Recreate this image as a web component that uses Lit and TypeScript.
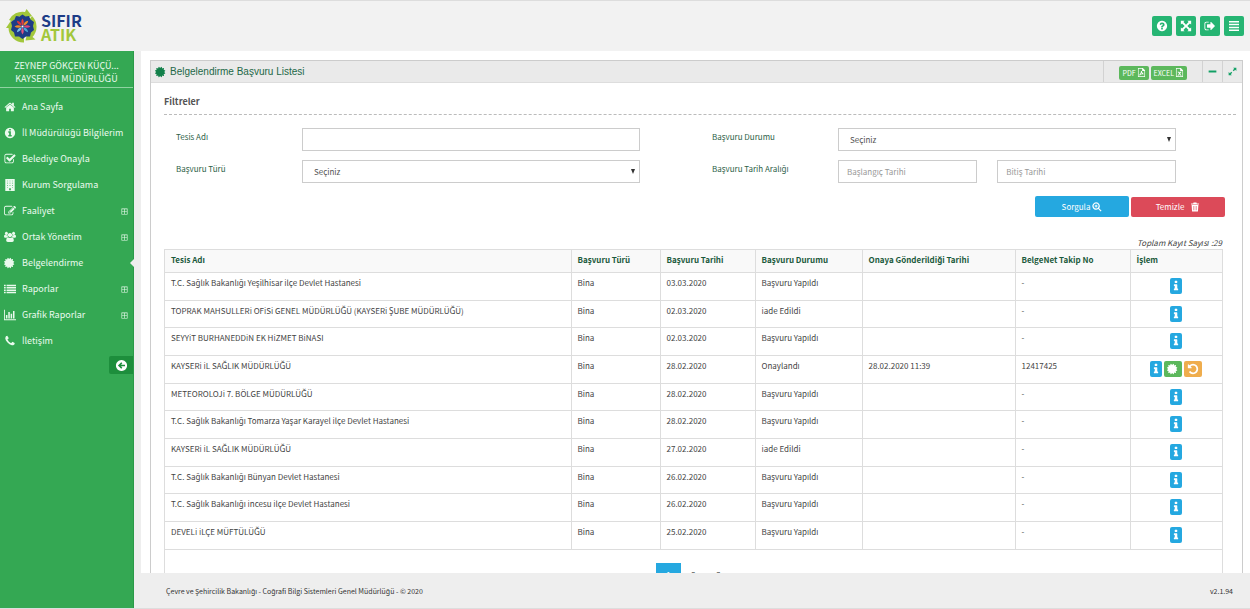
import { LitElement, html, svg, css, nothing } from "lit";
import { customElement } from "lit/decorators.js";

const CIRCLE =
  "q0 209-103 385.5t-279.5 279.5-385.5 103-385.5-103-279.5-279.5-103-385.5 103-385.5 279.5-279.5 385.5-103 385.5 103 279.5 279.5 103 385.5z";

const ICONS: Record<string, string> = {
  home: "M1472 992v480q0 26-19 45t-45 19h-384v-384h-256v384h-384q-26 0-45-19t-19-45v-480q0-1 .5-3t.5-3l575-474 575 474q1 2 1 6zm223-69l-62 74q-8 9-21 11h-3q-13 0-21-7l-692-577-692 577q-12 8-24 7-13-2-21-11l-62-74q-8-10-7-23.5t11-21.5l719-599q32-26 76-26t76 26l244 204v-195q0-14 9-23t23-9h192q14 0 23 9t9 23v408l219 182q10 8 11 21.5t-7 23.5z",
  infoCircle:
    "M1152 1376v-160q0-14-9-23t-23-9h-96v-512q0-14-9-23t-23-9h-320q-14 0-23 9t-9 23v160q0 14 9 23t23 9h96v320h-96q-14 0-23 9t-9 23v160q0 14 9 23t23 9h448q14 0 23-9t9-23zm-128-896v-160q0-14-9-23t-23-9h-192q-14 0-23 9t-9 23v160q0 14 9 23t23 9h192q14 0 23-9t9-23zm640 416" +
    CIRCLE,
  check:
    "M1472 930v318q0 119-84.5 203.5t-203.5 84.5h-832q-119 0-203.5-84.5t-84.5-203.5v-832q0-119 84.5-203.5t203.5-84.5h832q63 0 117 25 15 7 18 23 3 17-9 29l-49 49q-10 10-23 10-3 0-9-2-23-6-45-6h-832q-66 0-113 47t-47 113v832q0 66 47 113t113 47h832q66 0 113-47t47-113v-254q0-13 9-22l64-64q10-10 23-10 6 0 12 3 20 8 20 29zm231-489l-814 814q-24 24-57 24t-57-24l-430-430q-24-24-24-57t24-57l110-110q24-24 57-24t57 24l263 263 647-647q24-24 57-24t57 24l110 110q24 24 24 57t-24 57z",
  building:
    "M192 0h1408v1792h-1408zM448 256v96h128v-96zM832 256v96h128v-96zM1216 256v96h128v-96zM448 576v96h128v-96zM832 576v96h128v-96zM1216 576v96h128v-96zM448 896v96h128v-96zM832 896v96h128v-96zM1216 896v96h128v-96zM448 1216v96h128v-96zM1216 1216v96h128v-96zM768 1392v272h256v-272z",
  edit: "M888 1184l116-116-152-152-116 116v56h96v96h56zm440-720q-16-16-33 1l-350 350q-17 17-1 33t33-1l350-350q17-17 1-33zm80 594v190q0 119-84.5 203.5t-203.5 84.5h-832q-119 0-203.5-84.5t-84.5-203.5v-832q0-119 84.5-203.5t203.5-84.5h832q63 0 117 25 15 7 18 23 3 17-9 29l-49 49q-14 14-32 8-23-6-45-6h-832q-66 0-113 47t-47 113v832q0 66 47 113t113 47h832q66 0 113-47t47-113v-126q0-13 9-22l64-64q15-15 35-7t20 29zm-96-738l288 288-672 672h-288v-288zm444 132l-92 92-288-288 92-92q28-28 68-28t68 28l152 152q28 28 28 68t-28 68z",
  users:
    "M360 128a230 230 0 1 1-1 0zM1432 128a230 230 0 1 1-1 0zM896 280a320 320 0 1 1-1 0zM150 560q200 120 380 20q-20 200 90 320q-160 10-230 110h-210q-180-10-180-190q0-220 150-260zM1642 560q-200 120-380 20q20 200-90 320q160 10 230 110h210q180-10 180-190q0-220-150-260zM580 930q316 200 632 0q240 60 260 460q0 270-250 270h-652q-250 0-250-270q20-400 260-460z",
  certificate:
    "M1376 896l138 135q30 28 20 70-12 41-52 51l-188 48 53 186q12 41-19 70-29 31-70 19l-186-53-48 188q-10 40-51 52-12 2-19 2-31 0-51-22l-135-138-135 138q-28 30-70 20-41-11-51-52l-48-188-186 53q-41 12-70-19-31-29-19-70l53-186-188-48q-40-10-52-51-10-42 20-70l138-135-138-135q-30-28-20-70 12-41 52-51l188-48-53-186q-12-41 19-70 29-31 70-19l186 53 48-188q10-41 51-51 41-12 70 19l135 139 135-139q29-30 70-19 41 10 51 51l48 188 186-53q41-12 70 19 31 29 19 70l-53 186 188 48q40 10 52 51 10 42-20 70z",
  list: "M0 256h256v224h-256zM384 256h1408v224h-1408zM0 608h256v224h-256zM384 608h1408v224h-1408zM0 960h256v224h-256zM384 960h1408v224h-1408zM0 1312h256v224h-256zM384 1312h1408v224h-1408z",
  chart:
    "M0 128h128v1408h1664v128h-1792zM288 896h224v512h-224zM640 448h224v960h-224zM992 704h224v704h-224zM1344 288h224v1120h-224z",
  phone:
    "M1600 1240q0 27-10 70.5t-21 68.5q-21 50-122 106-94 51-186 51-27 0-52.5-3.5t-57.5-12.5-47.5-14.5-55.5-20.5-49-18q-98-35-175-83-128-79-264.5-215.5t-215.5-264.5q-48-77-83-175-3-9-18-49t-20.5-55.5-14.5-47.5-12.5-57.5-3.5-52.5q0-92 51-186 56-101 106-122 25-11 68.5-21t70.5-10q14 0 21 3 18 6 53 76 11 19 30 54t35 63.5 31 53.5q3 4 17.5 25t21.5 35.5 7 28.5q0 20-28.5 50t-62 55-62 53-28.5 46q0 9 5 22.5t8.5 20.5 14 24 11.5 19q76 137 174 235t235 174q2 1 19 11.5t24 14 20.5 8.5 22.5 5q18 0 46-28.5t53-62 55-62 50-28.5q14 0 28.5 7t35.5 21.5 25 17.5q25 15 53.5 31t63.5 35 54 30q70 35 76 53 3 7 3 21z",
  question:
    "M1024 1376v-192q0-14-9-23t-23-9h-192q-14 0-23 9t-9 23v192q0 14 9 23t23 9h192q14 0 23-9t9-23zm256-672q0-88-55.5-163t-138.5-116-170-41q-243 0-371 213-15 24 8 42l132 100q7 6 19 6 16 0 25-12 53-68 86-92 34-24 86-24 48 0 85.5 26t37.5 59q0 38-20 61t-68 45q-63 28-115.5 86.5t-52.5 125.5v36q0 14 9 23t23 9h192q14 0 23-9t9-23q0-19 21.5-49.5t54.5-49.5q32-18 49-28.5t46-35 44.5-48 28-60.5 12.5-81zm384 192" +
    CIRCLE,
  expand:
    "M128 128h560l-180 180 388 388 388-388-180-180h560v560l-180-180-388 388 388 388 180-180v560h-560l180-180-388-388-388 388 180 180h-560v-560l180 180 388-388-388-388-180 180z",
  signOut:
    "M704 1440q0 4 1 20t.5 26.5-3 23.5-10 19.5-20.5 6.5h-320q-119 0-203.5-84.5t-84.5-203.5v-704q0-119 84.5-203.5t203.5-84.5h320q13 0 22.5 9.5t9.5 22.5q0 4 1 20t.5 26.5-3 23.5-10 19.5-20.5 6.5h-320q-66 0-113 47t-47 113v704q0 66 47 113t113 47h312l11.5 1 11.5 3 8 5.5 7 9 2 13.5zm928-544q0 26-19 45l-544 544q-19 19-45 19t-45-19-19-45v-288h-448q-26 0-45-19t-19-45v-384q0-26 19-45t45-19h448v-288q0-26 19-45t45-19 45 19l544 544q19 19 19 45z",
  bars: "M150 150h1492v220h-1492zM150 574h1492v220h-1492zM150 998h1492v220h-1492zM150 1422h1492v220h-1492z",
  info: "M1216 1344v128q0 26-19 45t-45 19h-512q-26 0-45-19t-19-45v-128q0-26 19-45t45-19h64v-384h-64q-26 0-45-19t-19-45v-128q0-26 19-45t45-19h384q26 0 45 19t19 45v576h64q26 0 45 19t19 45zm-128-1152v192q0 26-19 45t-45 19h-256q-26 0-45-19t-19-45v-192q0-26 19-45t45-19h256q26 0 45 19t19 45z",
  undo: "M1664 896q0 156-61 298t-164 245-245 164-298 61q-172 0-327-72.5t-264-204.5q-7-10-6.5-22.5t8.5-20.5l137-138q10-9 25-9 16 2 23 12 73 95 179 147t225 52q104 0 198.5-40.5t163.5-109.5 109.5-163.5 40.5-198.5-40.5-198.5-109.5-163.5-163.5-109.5-198.5-40.5q-98 0-188 35.5t-160 101.5l137 138q31 30 14 69-17 40-59 40h-448q-26 0-45-19t-19-45v-448q0-42 40-59 39-17 69 14l130 129q107-101 244.5-156.5t284.5-55.5q156 0 298 61t245 164 164 245 61 298z",
  back: "M896 128a768 768 0 1 0 1 0zM860 440l150 150-180 190h550v232h-550l180 190-150 150-456-456z",
  trash:
    "M640 96h512l80 192h368v160h-1408v-160h368zM288 540h1216l-80 1156h-1056zM600 720v768h80v-768zM856 720v768h80v-768zM1112 720v768h80v-768z",
  zoomPlus:
    "M732 64a668 668 0 0 1 540 1060l440 440-148 148-440-440a668 668 0 1 1-392-1208zM732 290a442 442 0 1 0 1 0zM640 480h184v160h160v184h-160v160h-184v-160h-160v-184h160z",
  plusBox:
    "M128 128h1536v1536h-1536zM288 288v528h528v-528zM976 288v528h528v-528zM288 976v528h528v-528zM976 976v528h528v-528z",
  filePdf:
    "M192 0h960l448 448v1344h-1408zM320 128v1536h1152v-1088h-448v-448zM820 620h150q0 300 330 520l-40 130q-260-70-500 10q-130 200-260 220l-80-110q370-220 400-770zM880 960l-90 200h210z",
  fileExcel:
    "M192 0h960l448 448v1344h-1408zM320 128v1536h1152v-1088h-448v-448zM500 740h300l100 170 100-170h300v120h-90l-190 260 200 270h90v120h-330v-120h40l-110-170-110 170h40v120h-330v-120h90l200-270-190-260h-110z",
  minus: "M128 700h1536v392h-1536z",
  resize:
    "M1010 128h654v654l-236-236-290 290-182-182 290-290zM782 1664h-654v-654l236 236 290-290 182 182-290 290z",
};

const icon = (name: string) => html`<svg class="icon ${name}" viewBox="0 0 1792 1792" aria-hidden="true">
  <path fill-rule="evenodd" d=${ICONS[name]}></path>
</svg>`;

const tr = (text: string) =>
  text.split(/(İ)/).map((part) => (part === "İ" ? html`<span class="dot">İ</span>` : part));

interface MenuItem {
  icon: string;
  label: string;
  more?: boolean;
  active?: boolean;
}

const MENU: MenuItem[] = [
  { icon: "home", label: "Ana Sayfa" },
  { icon: "infoCircle", label: "İl Müdürülüğü Bilgilerim" },
  { icon: "check", label: "Belediye Onayla" },
  { icon: "building", label: "Kurum Sorgulama" },
  { icon: "edit", label: "Faaliyet", more: true },
  { icon: "users", label: "Ortak Yönetim", more: true },
  { icon: "certificate", label: "Belgelendirme", active: true },
  { icon: "list", label: "Raporlar", more: true },
  { icon: "chart", label: "Grafik Raporlar", more: true },
  { icon: "phone", label: "İletişim" },
];

const ROWS: string[][] = [
  ["T.C. Sağlık Bakanlığı Yeşilhisar İlçe Devlet Hastanesi", "03.03.2020", "Başvuru Yapıldı", "", "-"],
  ["TOPRAK MAHSULLERİ OFİSİ GENEL MÜDÜRLÜĞÜ (KAYSERİ ŞUBE MÜDÜRLÜĞÜ)", "02.03.2020", "İade Edildi", "", "-"],
  ["SEYYİT BURHANEDDİN EK HİZMET BİNASI", "02.03.2020", "Başvuru Yapıldı", "", "-"],
  ["KAYSERİ İL SAĞLIK MÜDÜRLÜĞÜ", "28.02.2020", "Onaylandı", "28.02.2020 11:39", "12417425"],
  ["METEOROLOJİ 7. BÖLGE MÜDÜRLÜĞÜ", "28.02.2020", "Başvuru Yapıldı", "", "-"],
  ["T.C. Sağlık Bakanlığı Tomarza Yaşar Karayel İlçe Devlet Hastanesi", "28.02.2020", "Başvuru Yapıldı", "", "-"],
  ["KAYSERİ İL SAĞLIK MÜDÜRLÜĞÜ", "27.02.2020", "İade Edildi", "", "-"],
  ["T.C. Sağlık Bakanlığı Bünyan Devlet Hastanesi", "26.02.2020", "Başvuru Yapıldı", "", "-"],
  ["T.C. Sağlık Bakanlığı İncesu İlçe Devlet Hastanesi", "26.02.2020", "Başvuru Yapıldı", "", "-"],
  ["DEVELİ İLÇE MÜFTÜLÜĞÜ", "25.02.2020", "Başvuru Yapıldı", "", "-"],
];

const PETALS = ["#e9403a", "#f28c28", "#d8447a", "#4aa8d8", "#e2527f", "#7ac0e8", "#f28c28", "#d8343f"];

@customElement("app-root")
export class AppRoot extends LitElement {
  static styles = css`
    :host {
      display: flex;
      flex-direction: column;
      height: 100vh;
      overflow: hidden;
      box-sizing: border-box;
      font-family: "Noto Sans CJK JP", "Noto Sans", sans-serif;
      font-size: 8px;
      line-height: 14px;
      color: #444;
      background: #fff;
    }
    * {
      box-sizing: border-box;
    }
    button,
    input,
    select {
      font: inherit;
      margin: 0;
    }
    button {
      display: flex;
      align-items: center;
      justify-content: center;
      padding: 0;
      border: 0;
      border-radius: 2px;
      color: #fff;
      cursor: pointer;
    }
    a {
      color: inherit;
      text-decoration: none;
    }
    .dot {
      font-family: "Open Sans", "Noto Sans", sans-serif;
      line-height: 1;
    }
    .icon {
      display: block;
      flex: none;
      width: 10px;
      height: 10px;
      fill: currentColor;
    }
    .top {
      flex: none;
      display: flex;
      align-items: center;
      justify-content: space-between;
      height: 51px;
      padding: 0 6px;
      background: #f2f2f2;
      border-top: 1px solid #ddd;
    }
    .brand {
      display: flex;
      align-items: center;
      gap: 2px;
      font-size: 16px;
      font-weight: 700;
      line-height: 14px;
    }
    .mark {
      display: block;
      width: 33px;
      height: 35px;
    }
    .word {
      display: flex;
      flex-direction: column;
      padding-top: 2px;
      color: #1d3c87;
    }
    .word-b {
      color: #a2c73b;
    }
    .tools {
      display: flex;
      gap: 4px;
    }
    .tool {
      width: 20px;
      height: 20px;
      background: #26b573;
    }
    .tool .icon {
      width: 12px;
      height: 12px;
    }
    .body {
      flex: 1;
      display: flex;
      min-height: 0;
      border-bottom: 1px solid #ddd;
    }
    .side {
      flex: none;
      display: flex;
      flex-direction: column;
      width: 134px;
      background: #34a853;
      border-right: 1px solid #2a9a48;
      color: #eafaee;
      font-size: 9px;
    }
    .user {
      padding: 8px 4px 2px;
      border-bottom: 1px solid #8fd3a1;
      text-align: center;
      line-height: 13px;
    }
    .menu {
      margin: 0;
      padding: 6px 0 0;
      list-style: none;
    }
    .link {
      position: relative;
      display: flex;
      align-items: center;
      gap: 6px;
      height: 26px;
      padding: 0 5px 0 4px;
      line-height: 16px;
    }
    .link .icon {
      width: 12px;
      height: 12px;
    }
    .link .plusBox {
      width: 7px;
      height: 7px;
      margin: 0 0 0 auto;
    }
    .active::after {
      content: "";
      position: absolute;
      right: -1px;
      border: 4px solid transparent;
      border-left: 0;
      border-right-color: #eee;
    }
    .fold {
      align-self: flex-end;
      width: 24px;
      height: 18px;
      margin-top: 2px;
      background: #1d8e3c;
      border-radius: 2px 0 0 2px;
    }
    .fold .icon {
      width: 13px;
      height: 13px;
    }
    .right {
      flex: 1;
      display: flex;
      flex-direction: column;
      min-width: 0;
      border-left: 7px solid #eee;
    }
    .main {
      flex: 1;
      min-height: 0;
      overflow: hidden;
      padding: 9px 7px 0 9px;
    }
    .panel {
      border: 1px solid #ccc;
    }
    .panel-head {
      display: flex;
      align-items: stretch;
      height: 22px;
      background: #eaeaea;
      border-bottom: 1px solid #ddd;
      color: #12804a;
    }
    .title {
      flex: 1;
      display: flex;
      align-items: center;
      gap: 3px;
      margin: 0;
      padding-left: 4px;
      font-family: "Liberation Sans", Arial, sans-serif;
      font-size: 10px;
      font-weight: 400;
      color: #226847;
    }
    .title .icon {
      width: 12px;
      height: 12px;
      color: #12804a;
    }
    .exports {
      display: flex;
      align-items: center;
      gap: 2px;
      padding: 2px 15px 0;
      border-left: 1px solid #d2d2d2;
    }
    .export {
      gap: 1px;
      height: 14px;
      padding: 0 3px;
      background: #5cb85c;
      font-size: 7px;
    }
    .export .icon {
      width: 9px;
      height: 9px;
    }
    .ctl {
      width: 20px;
      background: none;
      border-left: 1px solid #d2d2d2;
      border-radius: 0;
      color: #12a065;
    }
    .ctl .icon {
      width: 9px;
      height: 9px;
    }
    .panel-body {
      padding: 12px 6px 20px 13px;
    }
    .section {
      margin: 0;
      padding-bottom: 5px;
      border-bottom: 1px dashed #bbb;
      font-size: 9px;
      font-weight: 700;
      line-height: 14px;
      color: #555;
    }
    .filters {
      display: grid;
      grid-template-columns: 1fr 1fr;
      row-gap: 9px;
      padding-top: 13px;
    }
    .field {
      display: grid;
      grid-template-columns: 126px 1fr;
      padding: 0 60px 0 12px;
    }
    .label {
      padding-top: 2px;
      color: #2e6149;
    }
    .box {
      display: block;
      width: 100%;
      height: 23px;
      padding: 0 8px;
      border: 1px solid #ccc;
      border-radius: 0;
      background: #fff;
      color: #555;
      appearance: none;
    }
    .box::placeholder {
      color: #999;
      opacity: 1;
    }
    .pick {
      position: relative;
    }
    .pick .box {
      padding: 0 11px;
    }
    .pick::after {
      content: "";
      position: absolute;
      right: 5px;
      top: 9px;
      border: 2px solid transparent;
      border-top: 5px solid #333;
      border-bottom: 0;
    }
    .dates {
      display: grid;
      grid-template-columns: 7fr 9fr;
      gap: 20px;
    }
    .actions {
      display: flex;
      align-items: center;
      justify-content: flex-end;
      gap: 2px;
      padding: 13px 11px 0 0;
    }
    .action {
      width: 94px;
      height: 21px;
      gap: 2px;
      background: #25a8e0;
    }
    .danger {
      height: 20px;
      gap: 6px;
      background: #dc4a59;
    }
    .total {
      margin: 0;
      padding: 19px 14px 0 0;
      text-align: right;
      font-style: italic;
      line-height: 13px;
    }
    .grid {
      margin-right: 13px;
      border-left: 1px solid #ddd;
      border-right: 1px solid #ddd;
    }
    .table {
      width: 100%;
      table-layout: fixed;
      border-collapse: collapse;
      border-style: hidden;
    }
    .frame {
      border-top: 1px solid #ddd;
      border-bottom: 1px solid #ddd;
    }
    .c-type { width: 89px; }
    .c-date { width: 95px; }
    .c-state { width: 107px; }
    .c-sent { width: 153px; }
    .c-no { width: 115px; }
    .c-op { width: 92px; }
    th,
    td {
      border: 1px solid #ddd;
      padding: 3px 6px;
      text-align: left;
      vertical-align: top;
      white-space: nowrap;
    }
    th {
      height: 22px;
      background: #f9f9f9;
      color: #1b5a3c;
      font-weight: 700;
    }
    td {
      height: 28px;
    }
    tr:nth-child(3n + 2) td {
      height: 27px;
    }
    .ops {
      display: flex;
      justify-content: center;
      gap: 2px;
      padding-top: 2px;
    }
    .op {
      width: 18px;
      height: 16px;
      background: #5cb85c;
    }
    .op .icon {
      width: 12px;
      height: 12px;
    }
    .op-info {
      width: 12px;
      background: #25a8e0;
    }
    .op-undo {
      background: #efad4d;
    }
    .pages {
      display: flex;
      justify-content: center;
      padding-top: 13px;
    }
    .page {
      width: 25px;
      height: 24px;
      background: none;
      border-radius: 0;
      color: #333;
    }
    .current {
      background: #25a8e0;
      color: #fff;
    }
    .foot {
      flex: none;
      display: flex;
      align-items: center;
      justify-content: space-between;
      height: 35px;
      padding: 0 17px 0 25px;
      background: #eee;
      color: #333;
      font-size: 7px;
    }
  `;

  private logo() {
    return html`<svg class="mark" viewBox="0 0 66 70" aria-hidden="true">
      ${svg`
        <path d="M6 22A30 30 0 0 1 38 6l3-6 11 14-17 6 1-6A22 22 0 0 0 14 25z" fill="#a2c73b"/>
        <path d="M52 14A30 30 0 0 1 53 56l6 5-20 2 4-17 4 4A22 22 0 0 0 46 22z" fill="#a2c73b"/>
        <path d="M36 67A30 30 0 0 1 5 38l-5 0 10-15 11 15-6 0A23 23 0 0 0 36 58z" fill="#a2c73b"/>
        <path d="M33 11l6 4 7-1 3 7 7 5-2 8 2 8-6 5-2 8-8 0-7 5-7-5-8 0-2-8-6-5 2-8-2-8 7-5 3-7 7 1z" fill="#1d3c87"/>
        ${PETALS.map(
          (c, i) =>
            svg`<path d="M33 33Q28 26 33 19Q38 26 33 33z" fill=${c} transform="rotate(${i * 45} 33 35)"/>`
        )}
        <circle cx="33" cy="35" r="2" fill="#fff"/>
      `}
    </svg>`;
  }

  private row(r: string[]) {
    const approved = r[3] !== "";
    return html`<tr>
      <td>${tr(r[0])}</td>
      <td>Bina</td>
      <td>${r[1]}</td>
      <td>${tr(r[2])}</td>
      <td>${r[3]}</td>
      <td>${r[4]}</td>
      <td>
        <div class="ops">
          <button class="op op-info" aria-label="Detay">${icon("info")}</button>
          ${approved
            ? html`<button class="op" aria-label="Belge">${icon("certificate")}</button>
                <button class="op op-undo" aria-label="Geri Al">${icon("undo")}</button>`
            : nothing}
        </div>
      </td>
    </tr>`;
  }

  render() {
    return html`
      <header class="top">
        <a class="brand" href="#">
          ${this.logo()}
          <span class="word"><span>SIFIR</span><span class="word-b">ATIK</span></span>
        </a>
        <div class="tools">
          <button class="tool" aria-label="Yardım">${icon("question")}</button>
          <button class="tool" aria-label="Tam Ekran">${icon("expand")}</button>
          <button class="tool" aria-label="Çıkış">${icon("signOut")}</button>
          <button class="tool" aria-label="Menü">${icon("bars")}</button>
        </div>
      </header>
      <div class="body">
        <nav class="side">
          <div class="user">ZEYNEP GÖKÇEN KÜÇÜ...<br />${tr("KAYSERİ İL MÜDÜRLÜĞÜ")}</div>
          <ul class="menu">
            ${MENU.map(
              (m) => html`<li>
                <a class="link ${m.active ? "active" : ""}" href="#"
                  >${icon(m.icon)}<span>${tr(m.label)}</span>${m.more ? icon("plusBox") : nothing}</a
                >
              </li>`
            )}
          </ul>
          <button class="fold" aria-label="Daralt">${icon("back")}</button>
        </nav>
        <div class="right">
          <main class="main">
            <section class="panel">
              <div class="panel-head">
                <h1 class="title">${icon("certificate")}<span>Belgelendirme Başvuru Listesi</span></h1>
                <div class="exports">
                  <button class="export">PDF${icon("filePdf")}</button>
                  <button class="export">EXCEL${icon("fileExcel")}</button>
                </div>
                <button class="ctl" aria-label="Küçült">${icon("minus")}</button>
                <button class="ctl" aria-label="Büyüt">${icon("resize")}</button>
              </div>
              <div class="panel-body">
                <h2 class="section">Filtreler</h2>
                <form class="filters">
                  <div class="field">
                    <label class="label" for="name">Tesis Adı</label>
                    <input class="box" id="name" type="text" />
                  </div>
                  <div class="field">
                    <label class="label" for="state">Başvuru Durumu</label>
                    <div class="pick">
                      <select class="box" id="state"><option>Seçiniz</option></select>
                    </div>
                  </div>
                  <div class="field">
                    <label class="label" for="type">Başvuru Türü</label>
                    <div class="pick">
                      <select class="box" id="type"><option>Seçiniz</option></select>
                    </div>
                  </div>
                  <div class="field">
                    <label class="label" for="from">Başvuru Tarih Aralığı</label>
                    <div class="dates">
                      <input class="box" id="from" type="text" placeholder="Başlangıç Tarihi" />
                      <input class="box" type="text" placeholder="Bitiş Tarihi" aria-label="Bitiş Tarihi" />
                    </div>
                  </div>
                </form>
                <div class="actions">
                  <button class="action">Sorgula ${icon("zoomPlus")}</button>
                  <button class="action danger">Temizle ${icon("trash")}</button>
                </div>
                <p class="total">Toplam Kayıt Sayısı :29</p>
                <div class="grid">
                  <div class="frame">
                    <table class="table">
                      <colgroup>
                        <col />
                        <col class="c-type" />
                        <col class="c-date" />
                        <col class="c-state" />
                        <col class="c-sent" />
                        <col class="c-no" />
                        <col class="c-op" />
                      </colgroup>
                      <thead>
                        <tr>
                          <th>Tesis Adı</th>
                          <th>Başvuru Türü</th>
                          <th>Başvuru Tarihi</th>
                          <th>Başvuru Durumu</th>
                          <th>Onaya Gönderildiği Tarihi</th>
                          <th>BelgeNet Takip No</th>
                          <th>${tr("İşlem")}</th>
                        </tr>
                      </thead>
                      <tbody>
                        ${ROWS.map((r) => this.row(r))}
                      </tbody>
                    </table>
                  </div>
                  <div class="pages">
                    <button class="page" aria-label="Önceki">‹</button>
                    <button class="page current">1</button>
                    <button class="page">2</button>
                    <button class="page">3</button>
                    <button class="page" aria-label="Sonraki">›</button>
                  </div>
                </div>
              </div>
            </section>
          </main>
          <footer class="foot">
            <span>Çevre ve Şehircilik Bakanlığı - Coğrafi Bilgi Sistemleri Genel Müdürlüğü - © 2020</span>
            <span>v2.1.94</span>
          </footer>
        </div>
      </div>
    `;
  }
}
